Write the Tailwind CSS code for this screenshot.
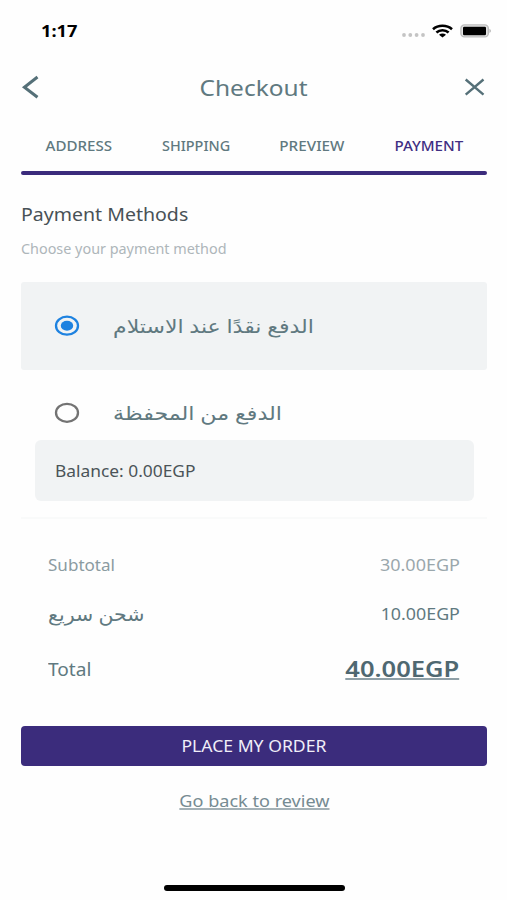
<!DOCTYPE html>
<html lang="en"><head><meta charset="utf-8"><title>Checkout</title>
<script src="https://cdn.jsdelivr.net/npm/@tailwindcss/browser@4"></script></head>
<body class="bg-[#fefefe] font-['Noto_Sans','DejaVu_Sans',sans-serif]">
<main class="flex h-[900px] w-[507px] flex-col overflow-hidden whitespace-nowrap leading-none text-[#607980]">
  <div class="flex h-[62px] shrink-0 items-center justify-between pl-[41px] pr-[15px] text-black">
    <span class="origin-left scale-x-[1.14] text-[16px] font-bold">1:17</span>
    <div class="flex items-center">
      <svg class="h-4 w-6" viewBox="0 0 24 16" fill="#c4c4c4"><circle cx="3" cy="12" r="1.9"/><circle cx="9.3" cy="12" r="1.9"/><circle cx="15.6" cy="12" r="1.9"/><circle cx="22" cy="12" r="1.9"/></svg>
      <svg class="ml-[7px] h-[14px] w-[21px]" viewBox="0 0 21 14" fill="none" stroke="#000" stroke-width="2.6"><path d="M1 5.2C6.2.6 14.8.6 20 5.2"/><path d="M4.4 8.5c3.4-3 8.8-3 12.2 0"/><path d="M7 10.8c2-1.6 5-1.6 7 0L10.5 13.6z" fill="#000" stroke="none"/></svg>
      <svg class="ml-[7px] h-[14px] w-[32px]" viewBox="0 0 32 14"><rect x=".9" y=".9" width="27.4" height="12" rx="3.5" fill="#e4e4e4" stroke="#bdbdbd" stroke-width="1.4"/><rect x="3" y="2.8" width="23" height="8.4" rx="1.2"/><path d="M29.5 4.8q2.6 2.1 0 4.2z" fill="#aaa"/></svg>
    </div>
  </div>
  <header class="flex h-[50px] shrink-0 items-center justify-between px-[21px]">
    <svg class="h-6 w-5" viewBox="0 0 20 24" fill="none" stroke="#557078" stroke-width="3"><path d="M16.5 2 3.4 12.2 16.5 22.3"/></svg>
    <h1 class="scale-x-[1.165] pl-[2px] pt-[3px] text-[21px]">Checkout</h1>
    <svg class="h-5 w-[22px]" viewBox="0 0 22 20" fill="none" stroke="#557078" stroke-width="2.4"><path d="M1.7 2.5 19.5 17.7M19.5 2.5 1.7 17.7"/></svg>
  </header>
  <nav class="ml-[21px] mr-5 h-[63px] shrink-0">
    <div class="grid h-[59px] grid-cols-4 items-center justify-items-center pt-[9px] text-[14px] font-medium">
      <span class="scale-x-[1.08]">ADDRESS</span><span class="scale-x-[1.03]">SHIPPING</span><span class="scale-x-[1.09]">PREVIEW</span><span class="scale-x-[1.08] text-[#3f2e83]">PAYMENT</span>
    </div>
    <div class="h-[3.5px] rounded-full bg-[#3b2b7c]"></div>
  </nav>
  <section class="h-[107px] shrink-0 pl-[21px] pt-[30px]">
    <h2 class="w-fit origin-left scale-x-[1.085] text-[18px] text-[#485156]">Payment Methods</h2>
    <p class="mt-5 w-fit origin-left scale-x-[1.065] text-[13.5px] text-[#aeb6ba]">Choose your payment method</p>
  </section>
  <label class="ml-[21px] mr-5 flex h-[88px] shrink-0 items-center rounded-[3px] bg-[#f1f3f4] pl-[33px]">
    <svg class="h-[22px] w-[26px] shrink-0" viewBox="0 0 26 22"><ellipse cx="13" cy="10.7" rx="11" ry="9" fill="none" stroke="#1e82e0" stroke-width="2.3"/><ellipse cx="13" cy="10.7" rx="6.2" ry="5" fill="#1e82e0"/></svg>
    <span class="ml-[33px] origin-left scale-x-[1.16] text-[19px]" dir="rtl">الدفع نقدًا عند الاستلام</span>
  </label>
  <section class="ml-[21px] mr-5 h-[149px] shrink-0 border-b-2 border-[#f9fafa]">
    <label class="flex h-[70px] items-center pl-[33px] pt-[16px]">
      <svg class="h-[22px] w-[26px] shrink-0" viewBox="0 0 26 22"><ellipse cx="13" cy="10.8" rx="11" ry="9" fill="none" stroke="#737373" stroke-width="2.3"/></svg>
      <span class="ml-[33px] origin-left scale-x-[1.17] text-[19px]" dir="rtl">الدفع من المحفظة</span>
    </label>
    <div class="ml-[14px] mr-[13px] flex h-[61px] items-center rounded-md bg-[#f1f3f4] pl-5 pt-[2px] text-[#4b5358]">
      <span class="origin-left scale-x-[1.12] text-[15.5px]">Balance: 0.00EGP</span>
    </div>
  </section>
  <section class="h-[207px] shrink-0 pl-[48px] pr-[47px] pt-[21px]">
    <div class="flex h-[50px] items-center justify-between pt-[2px] text-[15.5px] text-[#8b9ba1]">
      <span class="origin-left scale-x-110">Subtotal</span><span class="origin-right scale-x-[1.16] text-[#9aa7ac]">30.00EGP</span>
    </div>
    <div class="flex h-[49px] items-center justify-between text-[15.5px]">
      <span class="origin-left scale-x-[1.08] text-[19px]" dir="rtl">شحن سريع</span><span class="origin-right scale-x-[1.15]">10.00EGP</span>
    </div>
    <div class="flex h-[60px] items-center justify-between">
      <span class="origin-left scale-x-[1.09] pt-px text-[17.5px]">Total</span><span class="mr-px origin-right scale-x-[1.16] pb-[3px] text-[22px] font-semibold text-[#4f6871] underline decoration-[#8fa0a7] decoration-2 underline-offset-1">40.00EGP</span>
    </div>
  </section>
  <button class="ml-[21px] mr-5 flex h-10 shrink-0 items-center justify-center rounded-[4px] bg-[#3b2c7c] text-[16px] text-[#f0eef8]"><span class="scale-x-110">PLACE MY ORDER</span></button>
  <a class="flex h-[70px] shrink-0 items-center justify-center pb-px pl-px text-[16px] text-[#768b92]"><span class="scale-x-[1.13] underline decoration-[#a4b1b6] decoration-2 underline-offset-1">Go back to review</span></a>
  <div class="ml-px mt-[49px] h-[6px] w-[181px] shrink-0 self-center rounded-full bg-black"></div>
</main>
</body></html>
